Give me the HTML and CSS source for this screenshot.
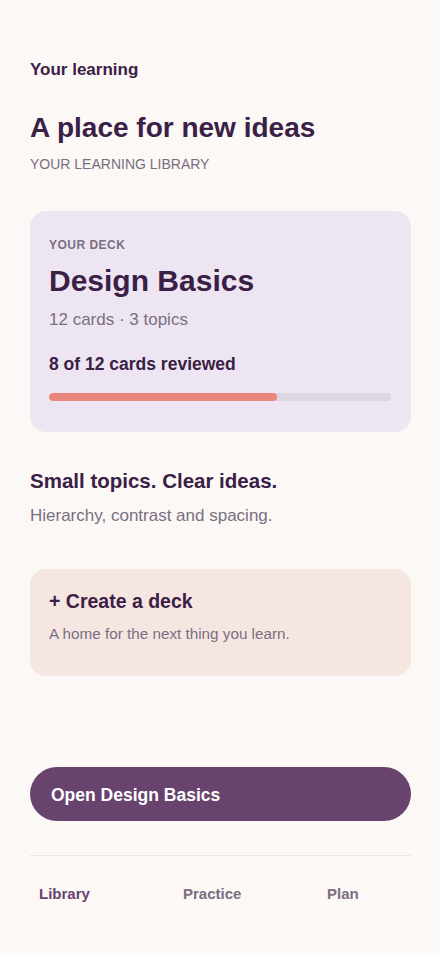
FILE: index.html
```html
<!DOCTYPE html>
<html lang="en">
  <head>
    <meta charset="UTF-8" />
    <meta name="viewport" content="width=device-width, initial-scale=1.0" />
    <title>Your learning</title>
    <link rel="stylesheet" href="styles.css">
  </head>
  <body>
    <div class="page">
      <p class="eyebrow">Your learning</p>
      <h1 class="title">A place for new ideas</h1>
      <p class="subtitle">YOUR LEARNING LIBRARY</p>

      <div class="deck">
        <p class="deck-label">YOUR DECK</p>
        <h2 class="deck-name">Design Basics</h2>
        <p class="deck-meta">12 cards · 3 topics</p>
        <p class="deck-progress">8 of 12 cards reviewed</p>
        <div class="bar">
          <div class="bar-fill" style="width: 66.67%"></div>
        </div>
      </div>

      <h3 class="topics">Small topics. Clear ideas.</h3>
      <p class="topics-text">Hierarchy, contrast and spacing.</p>

      <div class="create">
        <p class="create-title">+ Create a deck</p>
        <p class="create-text">A home for the next thing you learn.</p>
      </div>

      <button class="open-btn">Open Design Basics</button>

      <nav class="tabs">
        <span class="tab active">Library</span>
        <span class="tab">Practice</span>
        <span class="tab">Plan</span>
      </nav>
    </div>
  </body>
</html>
```

FILE: styles.css
```css
body {
  margin: 0;
  background-color: #fcf8f6;
  font-family: "Liberation Sans", Arial, sans-serif;
  color: #3b2045;
}

p,
h1,
h2,
h3 {
  margin: 0;
  line-height: 1.2;
}

.page {
  padding: 60px 29px 0 30px;
}

.eyebrow {
  font-size: 17px;
  font-weight: bold;
}

.title {
  margin-top: 31px;
  font-size: 28px;
  font-weight: bold;
}

.subtitle {
  margin-top: 11.5px;
  font-size: 14px;
  color: #7a6e81;
}

.deck {
  margin-top: 38px;
  padding: 27px 20px 31px 19px;
  background-color: #ede6f2;
  border-radius: 16px;
}

.deck-label {
  font-size: 12px;
  font-weight: bold;
  letter-spacing: 0.04em;
  color: #7a6e81;
}

.deck-name {
  margin-top: 10px;
  font-size: 30px;
  font-weight: bold;
}

.deck-meta {
  margin-top: 11px;
  font-size: 17px;
  color: #7a6e81;
}

.deck-progress {
  margin-top: 23.5px;
  font-size: 17.5px;
  font-weight: bold;
}

.bar {
  margin-top: 18px;
  height: 8px;
  border-radius: 4px;
  background-color: #ddd5e3;
  overflow: hidden;
}

.bar-fill {
  height: 100%;
  border-radius: 4px;
  background-color: #e9877a;
}

.topics {
  margin-top: 37px;
  font-size: 20.5px;
  font-weight: bold;
}

.topics-text {
  margin-top: 13px;
  font-size: 17px;
  color: #7a6e81;
}

.create {
  margin-top: 42px;
  padding: 21px 20px 33px 19px;
  background-color: #f5e6e1;
  border-radius: 16px;
}

.create-title {
  font-size: 19.5px;
  font-weight: bold;
}

.create-text {
  margin-top: 12px;
  font-size: 15.25px;
  color: #7a6e81;
}

.open-btn {
  display: flex;
  align-items: center;
  width: 100%;
  height: 54px;
  margin-top: 91px;
  padding: 2px 21px 0;
  border: none;
  border-radius: 27px;
  background-color: #67436e;
  color: #ffffff;
  font-family: inherit;
  font-size: 17.5px;
  font-weight: bold;
  cursor: pointer;
}

.tabs {
  display: grid;
  grid-template-columns: 144px 144px 1fr;
  margin-top: 34px;
  padding: 29px 0 0 9px;
  border-top: 1px solid #eee5e3;
}

.tab {
  font-size: 15px;
  font-weight: bold;
  line-height: 1.2;
  color: #7a6e81;
}

.tab.active {
  color: #67436e;
}
```
